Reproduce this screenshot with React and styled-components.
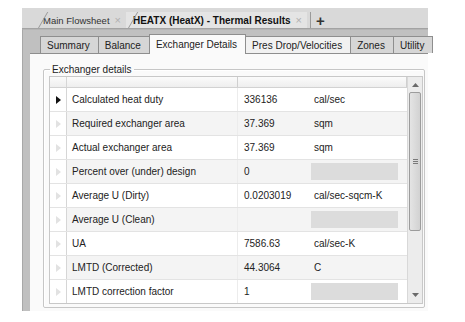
import styled, { createGlobalStyle } from "styled-components";

const GlobalStyle = createGlobalStyle`
    html, body {
        margin: 0;
        padding: 0;
        background: #ffffff;
    }
    body {
        font-family: "Liberation Sans", Arial, sans-serif;
        color: #222222;
    }
`;

const rows = [
    { name: "Calculated heat duty", value: "336136", unit: "cal/sec" },
    { name: "Required exchanger area", value: "37.369", unit: "sqm" },
    { name: "Actual exchanger area", value: "37.369", unit: "sqm" },
    { name: "Percent over (under) design", value: "0", unit: null },
    { name: "Average U (Dirty)", value: "0.0203019", unit: "cal/sec-sqcm-K" },
    { name: "Average U (Clean)", value: "", unit: null },
    { name: "UA", value: "7586.63", unit: "cal/sec-K" },
    { name: "LMTD (Corrected)", value: "44.3064", unit: "C" },
    { name: "LMTD correction factor", value: "1", unit: null },
];

const subTabs = [
    { label: "Summary" },
    { label: "Balance" },
    { label: "Exchanger Details", active: true },
    { label: "Pres Drop/Velocities", light: true },
    { label: "Zones" },
    { label: "Utility" },
];

function App() {
    return (
        <Page>
            <GlobalStyle />
            <Window>
                <DocTabs>
                    <DocTab>
                        Main Flowsheet <Close>×</Close>
                    </DocTab>
                    <DocTab $active>
                        HEATX (HeatX) - Thermal Results <Close>×</Close>
                    </DocTab>
                    <AddTab>+</AddTab>
                </DocTabs>

                <Frame>
                    <SubTabs>
                        {subTabs.map((t) => (
                            <SubTab key={t.label} $active={t.active} $light={t.light}>
                                {t.label}
                            </SubTab>
                        ))}
                    </SubTabs>

                    <Panel>
                        <Group>
                            <Legend>Exchanger details</Legend>
                            <Grid>
                                <GridMain>
                                    <HeaderRow>
                                        <RowHead $header />
                                        <HeadCell $w={171} />
                                        <HeadCell $grow />
                                    </HeaderRow>
                                    {rows.map((r, i) => (
                                        <Row key={r.name} $alt={i % 2 === 1}>
                                            <RowHead>
                                                <Pointer $current={i === 0} />
                                            </RowHead>
                                            <NameCell>{r.name}</NameCell>
                                            <ValueCell>{r.value}</ValueCell>
                                            <UnitCell>{r.unit ? r.unit : <EmptyUnit />}</UnitCell>
                                        </Row>
                                    ))}
                                </GridMain>
                                <ScrollBar>
                                    <ScrollArrow>
                                        <svg width="7" height="4" viewBox="0 0 7 4">
                                            <path d="M0 4 L3.5 0 L7 4 Z" fill="#6a6a6a" />
                                        </svg>
                                    </ScrollArrow>
                                    <Thumb>
                                        <Grip />
                                        <Grip />
                                        <Grip />
                                    </Thumb>
                                    <Track />
                                    <ScrollArrow>
                                        <svg width="7" height="4" viewBox="0 0 7 4">
                                            <path d="M0 0 L3.5 4 L7 0 Z" fill="#6a6a6a" />
                                        </svg>
                                    </ScrollArrow>
                                </ScrollBar>
                            </Grid>
                        </Group>
                    </Panel>
                </Frame>
            </Window>
        </Page>
    );
}

const Page = styled.div`
    padding: 8px 0 0 22px;
`;

const Window = styled.div`
    width: 406px;
    display: flex;
    flex-direction: column;
`;

const DocTabs = styled.div`
    height: 20px;
    display: flex;
    align-items: flex-end;
    padding-left: 14px;
    background: #d9d9d9;
    border-bottom: 1px solid #a3a3a3;
    font-size: 10px;
`;

const DocTab = styled.div`
    position: relative;
    height: 16px;
    display: flex;
    align-items: center;
    padding: 0 5px 0 7px;
    color: ${(p) => (p.$active ? "#111111" : "#333333")};
    font-weight: ${(p) => (p.$active ? 700 : 400)};
    font-size: ${(p) => (p.$active ? "10px" : "9.5px")};
    background: ${(p) => (p.$active ? "#e4e4e4" : "transparent")};

    &::before {
        content: "";
        position: absolute;
        left: 2px;
        top: 0;
        bottom: 0;
        border-left: 1px solid #9a9a9a;
        transform: skewX(-30deg);
        transform-origin: bottom left;
    }
`;

const Close = styled.span`
    margin-left: 5px;
    color: #b0b0b0;
    font-weight: 400;
    font-size: 11px;
`;

const AddTab = styled.div`
    height: 16px;
    display: flex;
    align-items: center;
    padding: 0 5px;
    margin-left: 3px;
    border-left: 1px solid #9a9a9a;
    font-size: 15px;
    font-weight: 700;
    color: #333333;
`;

const Frame = styled.div`
    display: flex;
    flex-direction: column;
    background: #c0c0c0;
    padding: 6px 0 0 7px;
    border-left: 1px solid #a8a8a8;
    border-top: 1px solid #b5b5b5;
`;

const SubTabs = styled.div`
    display: flex;
    align-items: flex-end;
    padding-left: 10px;
    height: 17px;
`;

const SubTab = styled.div`
    height: ${(p) => (p.$active ? "20px" : "17px")};
    box-sizing: border-box;
    display: flex;
    align-items: center;
    padding: 0 8px 0 6px;
    font-size: 10px;
    color: #222222;
    white-space: nowrap;
    background: ${(p) => (p.$active ? "#fafafa" : p.$light ? "#f1f1f1" : "#d6d6d6")};
    border: 1px solid #8e8e8e;
    border-bottom: none;
    margin-right: -1px;
    margin-bottom: ${(p) => (p.$active ? "-1px" : "0")};
    position: relative;
    z-index: ${(p) => (p.$active ? 1 : 0)};
`;

const Panel = styled.div`
    height: 258px;
    box-sizing: border-box;
    background: #fafafa;
    border-top: 1px solid #8e8e8e;
    padding: 10px 3px 3px 13px;
    display: flex;
    flex-direction: column;
`;

const Group = styled.fieldset`
    flex: 1;
    margin: 0;
    padding: 0 1px 1px 5px;
    border: 1px solid #c6c6c6;
    box-shadow: inset 1px 1px 0 #ffffff;
    border-radius: 2px;
    min-width: 0;
    display: flex;
`;

const Legend = styled.legend`
    font-size: 10px;
    color: #222222;
    padding: 0 2px;
    margin-left: 1px;
`;

const Grid = styled.div`
    flex: 1;
    display: flex;
    border: 1px solid #c8c8c8;
    background: #ffffff;
    margin-top: 1px;
    height: 228px;
    box-sizing: border-box;
`;

const GridMain = styled.div`
    flex: 1;
    display: flex;
    flex-direction: column;
    overflow: hidden;
`;

const HeaderRow = styled.div`
    display: flex;
    height: 10px;
    flex-shrink: 0;
    background: linear-gradient(#fbfbfb, #eeeeee);
    border-bottom: 1px solid #d2d2d2;
`;

const HeadCell = styled.div`
    width: ${(p) => (p.$w ? `${p.$w}px` : "auto")};
    flex: ${(p) => (p.$grow ? 1 : "none")};
    border-right: 1px solid #cfcfcf;
    box-sizing: border-box;
`;

const Row = styled.div`
    display: flex;
    height: 24px;
    flex-shrink: 0;
    box-sizing: border-box;
    align-items: stretch;
    background: ${(p) => (p.$alt ? "#f4f4f4" : "#ffffff")};
    border-bottom: 1px solid #e3e3e3;
    font-size: 10px;
    color: #222222;
`;

const RowHead = styled.div`
    width: 17px;
    flex: none;
    box-sizing: border-box;
    border-right: 1px solid #d6d6d6;
    display: flex;
    align-items: center;
    justify-content: center;
    background: ${(p) => (p.$header ? "transparent" : "#ffffff")};
`;

const Pointer = styled.div`
    width: 0;
    height: 0;
    border-top: 4px solid transparent;
    border-bottom: 4px solid transparent;
    border-left: 5px solid ${(p) => (p.$current ? "#111111" : "#e2e2e2")};
`;

const NameCell = styled.div`
    width: 171px;
    flex: none;
    box-sizing: border-box;
    padding-left: 5px;
    display: flex;
    align-items: center;
    border-right: 1px solid #ececec;
    white-space: nowrap;
`;

const ValueCell = styled.div`
    width: 70px;
    flex: none;
    box-sizing: border-box;
    padding-left: 6px;
    display: flex;
    align-items: center;
`;

const UnitCell = styled.div`
    flex: 1;
    display: flex;
    align-items: center;
    padding-left: 6px;
    white-space: nowrap;
`;

const EmptyUnit = styled.div`
    width: 87px;
    height: 17px;
    margin-left: -3px;
    background: #dcdcdc;
`;

const ScrollBar = styled.div`
    width: 15px;
    flex: none;
    display: flex;
    flex-direction: column;
    background: #ececec;
    border-left: 1px solid #d8d8d8;
    padding: 1px;
    box-sizing: border-box;
`;

const ScrollArrow = styled.div`
    height: 14px;
    flex: none;
    display: flex;
    align-items: center;
    justify-content: center;
`;

const Thumb = styled.div`
    height: 139px;
    flex: none;
    box-sizing: border-box;
    border: 1px solid #9c9c9c;
    border-radius: 2px;
    background: linear-gradient(90deg, #e4e4e4, #d2d2d2);
    display: flex;
    flex-direction: column;
    align-items: center;
    justify-content: center;
    gap: 1px;
`;

const Grip = styled.div`
    width: 5px;
    height: 1px;
    background: #7a7a7a;
`;

const Track = styled.div`
    flex: 1;
`;

export default App;
